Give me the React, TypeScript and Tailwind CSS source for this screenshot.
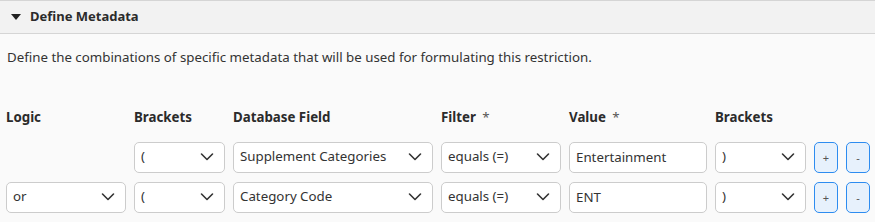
import React from "react";

type Row = {
  logic?: string;
  open: string;
  field: string;
  filter: string;
  value: string;
  close: string;
};

const rows: Row[] = [
  { open: "(", field: "Supplement Categories", filter: "equals (=)", value: "Entertainment", close: ")" },
  { logic: "or", open: "(", field: "Category Code", filter: "equals (=)", value: "ENT", close: ")" },
];

function Chevron() {
  return (
    <svg
      className="pointer-events-none absolute right-[11px] top-1/2 -translate-y-1/2"
      width="14"
      height="9"
      viewBox="0 0 14 9"
      fill="none"
    >
      <path d="M1.5 1.5 7 7l5.5-5.5" stroke="#333" strokeWidth="1.6" strokeLinecap="round" strokeLinejoin="round" />
    </svg>
  );
}

function Select({ value, width }: { value: string; width: string }) {
  return (
    <div className={`relative ${width}`}>
      <select
        defaultValue={value}
        className="h-[31px] w-full appearance-none rounded-[5px] border border-[#cccccc] bg-white px-[6px] text-[13.3px] text-[#333] outline-none"
      >
        <option>{value}</option>
      </select>
      <Chevron />
    </div>
  );
}

function SmallButton({ label }: { label: string }) {
  return (
    <button className="flex h-[31px] w-[24px] items-center justify-center rounded-[5px] border border-[#2d8cf0] bg-[#e7f1fc] text-[11px] leading-none text-[#555]">
      {label}
    </button>
  );
}

export default function App() {
  const font = { fontFamily: '"Noto Sans", "Open Sans", sans-serif' };

  return (
    <div className="h-[222px] w-[875px] bg-[#fafafa] text-[#333]" style={font}>
      <div className="flex h-[34px] items-center gap-[9px] border-y border-[#d5d5d5] bg-[#f2f2f2] pl-[11px]">
        <svg width="10" height="6" viewBox="0 0 10 6">
          <path d="M0 0h10L5 6z" fill="#222" />
        </svg>
        <span className="text-[13px] font-bold text-[#2b2b2b]">Define Metadata</span>
      </div>

      <p className="mt-[14px] pl-[7px] text-[13.3px]">
        Define the combinations of specific metadata that will be used for formulating this restriction.
      </p>

      <div className="mt-[40px] flex flex-col gap-[9px] pl-[6px]">
        <div className="flex gap-2 text-[13.3px] font-bold text-[#2b2b2b]">
          <span className="w-[120px]">Logic</span>
          <span className="w-[91px]">Brackets</span>
          <span className="w-[200px]">Database Field</span>
          <span className="w-[120px]">
            Filter <span className="ml-[3px] font-normal text-[#555]">*</span>
          </span>
          <span className="w-[138px]">
            Value <span className="ml-[3px] font-normal text-[#555]">*</span>
          </span>
          <span className="w-[91px]">Brackets</span>
        </div>

        {rows.map((row, i) => (
          <div key={i} className={`flex gap-2 ${i === 0 ? "mt-[5px]" : ""}`}>
            {row.logic ? <Select value={row.logic} width="w-[120px]" /> : <div className="w-[120px]" />}
            <Select value={row.open} width="w-[91px]" />
            <Select value={row.field} width="w-[200px]" />
            <Select value={row.filter} width="w-[120px]" />
            <input
              defaultValue={row.value}
              className="h-[31px] w-[138px] rounded-[5px] border border-[#cccccc] bg-white px-[6px] text-[13.3px] text-[#333] outline-none"
            />
            <Select value={row.close} width="w-[91px]" />
            <SmallButton label="+" />
            <SmallButton label="-" />
          </div>
        ))}
      </div>
    </div>
  );
}
